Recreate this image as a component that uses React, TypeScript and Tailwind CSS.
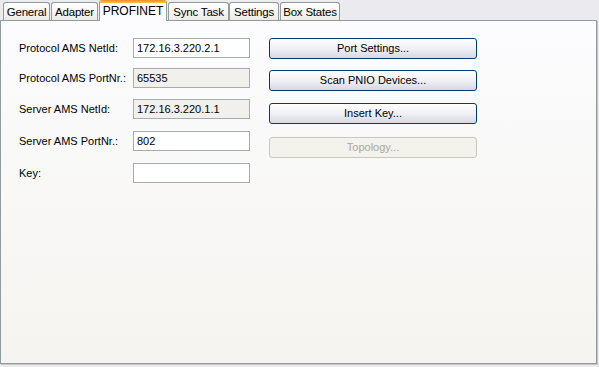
import React from "react";

const tabs = [
  { label: "General", w: "w-[47px]", ml: "ml-[3px]" },
  { label: "Adapter", w: "w-[47px]", ml: "ml-[1px]" },
  { label: "PROFINET", w: "w-[68px]", ml: "ml-[1px]", active: true },
  { label: "Sync Task", w: "w-[61px]", ml: "ml-[1px]" },
  { label: "Settings", w: "w-[50px]", ml: "ml-0" },
  { label: "Box States", w: "w-[60px]", ml: "ml-[1px]" },
];

const fields = [
  { label: "Protocol AMS NetId:", value: "172.16.3.220.2.1", ro: false, mt: "mt-0" },
  { label: "Protocol AMS PortNr.:", value: "65535", ro: true, mt: "mt-[10px]" },
  { label: "Server AMS NetId:", value: "172.16.3.220.1.1", ro: true, mt: "mt-[11px]" },
  { label: "Server AMS PortNr.:", value: "802", ro: false, mt: "mt-[12px]" },
  { label: "Key:", value: "", ro: false, mt: "mt-[12px]" },
];

const buttons = [
  { label: "Port Settings...", mt: "mt-0" },
  { label: "Scan PNIO Devices...", mt: "mt-[11px]" },
  { label: "Insert Key...", mt: "mt-[12px]" },
  { label: "Topology...", mt: "mt-[13px]", disabled: true },
];

export default function App() {
  return (
    <div
      className="w-[599px] h-[367px] bg-[#ebeaee] text-[11px] text-black overflow-hidden"
      style={{ fontFamily: '"Liberation Sans", Arial, sans-serif' }}
    >
      {/* tab strip */}
      <div className="flex items-end h-[20px] relative z-10">
        {tabs.map((t) =>
          t.active ? (
            <div
              key={t.label}
              className={`${t.w} ${t.ml} h-[21px] -mb-[1px] flex flex-col border-x border-[#919b9c] rounded-t-[3px] bg-[#fcfcfe] overflow-hidden`}
            >
              <div className="h-[3px] bg-gradient-to-b from-[#e68b2c] to-[#ffc73c]" />
              <div className="flex-1 flex justify-center pt-[1px] text-[12px] leading-[14px] whitespace-nowrap">
                {t.label}
              </div>
            </div>
          ) : (
            <div
              key={t.label}
              className={`${t.w} ${t.ml} h-[18px] flex justify-center pt-[2px] border border-b-0 border-[#919b9c] rounded-t-[3px] bg-gradient-to-b from-white to-[#ecebe6] text-[11.5px] leading-[14px] whitespace-nowrap tracking-[-0.2px]`}
            >
              {t.label}
            </div>
          )
        )}
      </div>

      {/* panel */}
      <div className="w-[597px] h-[344px] border border-[#919b9c] bg-gradient-to-b from-[#fcfcfe] to-[#f5f4f0] shadow-[1px_1px_0_#c8c7c2] flex pt-[17px]">
        <div className="flex flex-col pl-[18px]">
          {fields.map((f) => (
            <div key={f.label} className={`flex items-center h-[20px] ${f.mt}`}>
              <span className="w-[114px] whitespace-nowrap">{f.label}</span>
              <div
                className={`w-[117px] h-[20px] border border-[#a5acb2] px-[3px] flex items-center ${
                  f.ro ? "bg-[#f1f0ec]" : "bg-white"
                }`}
              >
                {f.value}
              </div>
            </div>
          ))}
        </div>

        <div className="flex flex-col ml-[19px]">
          {buttons.map((b) =>
            b.disabled ? (
              <div
                key={b.label}
                className={`${b.mt} w-[208px] h-[21px] rounded-[3px] border border-[#c9c7ba] bg-[#f3f2ec] text-[#aca899] flex items-center justify-center`}
              >
                {b.label}
              </div>
            ) : (
              <div
                key={b.label}
                className={`${b.mt} w-[208px] h-[21px] rounded-[3px] border border-[#003c74] bg-gradient-to-b from-white via-[#f0f0f5] to-[#d8d8e4] flex items-center justify-center`}
              >
                {b.label}
              </div>
            )
          )}
        </div>
      </div>
    </div>
  );
}
